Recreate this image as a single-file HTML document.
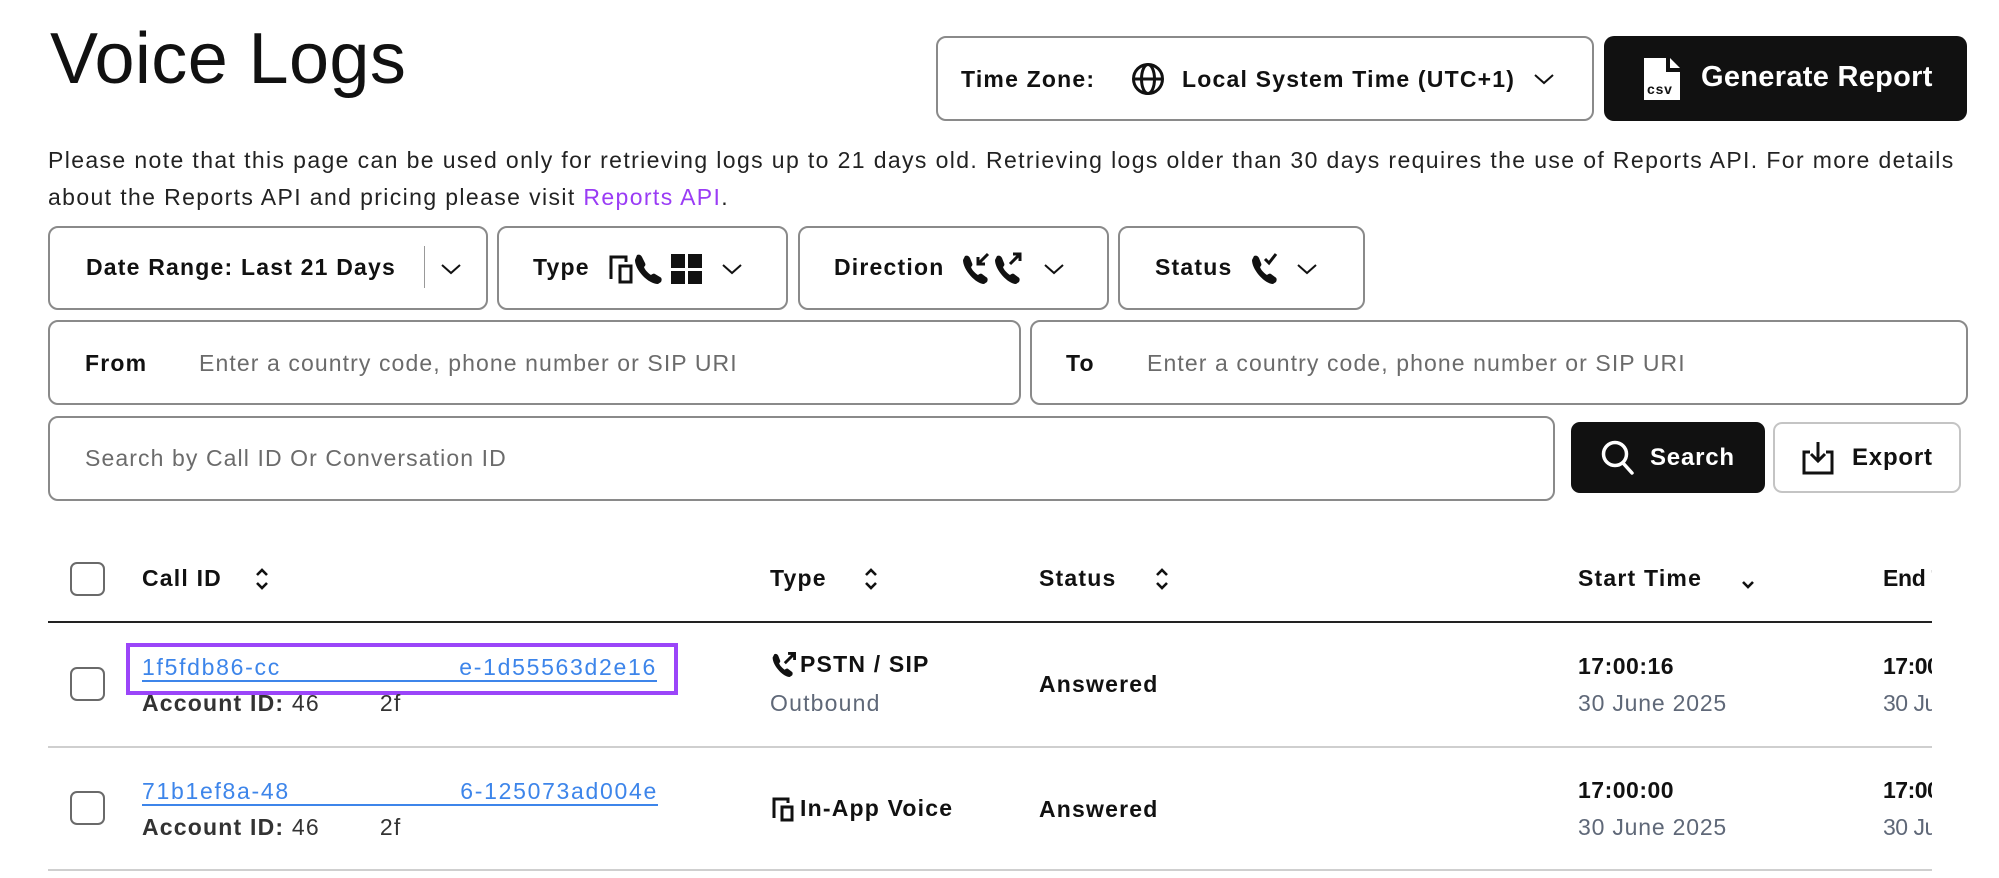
<!DOCTYPE html>
<html><head><meta charset="utf-8"><style>
*{box-sizing:border-box;margin:0;padding:0}
body{width:1999px;height:878px;overflow:hidden;background:#fff;font-family:"Liberation Sans",sans-serif;color:#111;position:relative;letter-spacing:0.8px}
.a{position:absolute}
.box{position:absolute;border:2px solid #8a8a8a;border-radius:10px;background:#fff}
.lbl{position:absolute;font-weight:700;font-size:23px;white-space:nowrap}
.ph{position:absolute;color:#6b6b6b;font-size:23px;white-space:nowrap}
.chev{position:absolute}
.cb{position:absolute;width:35px;height:34px;border:2.5px solid #6a6a6a;border-radius:7px}
.hd{position:absolute;font-weight:700;font-size:23px;top:565px}
.link{position:absolute;color:#3d85ea;font-size:23px;border-bottom:2px solid #3d85ea;line-height:26px;white-space:nowrap}
.acc{position:absolute;font-size:23px;color:#333;white-space:nowrap}
.sub{position:absolute;font-size:23px;color:#5f6878;white-space:nowrap}
.bold{position:absolute;font-weight:700;font-size:23px;white-space:nowrap}
</style></head><body>
<div class="a" style="left:50px;top:19px;font-size:72px;line-height:80px;letter-spacing:0.4px">Voice Logs</div>

<div class="box" style="left:936px;top:36px;width:658px;height:85px"></div>
<div class="lbl" style="left:961px;top:66px;letter-spacing:1.2px">Time Zone:</div>
<svg class="a" style="left:1131px;top:62px" width="34" height="34" viewBox="0 0 34 34" fill="none" stroke="#111" stroke-width="3"><circle cx="17" cy="17" r="14.5"/><line x1="2.5" y1="17" x2="31.5" y2="17"/><ellipse cx="17" cy="17" rx="6.5" ry="14.5"/></svg>
<div class="lbl" style="left:1182px;top:66px;letter-spacing:1.2px">Local System Time (UTC+1)</div>
<svg class="chev" style="left:1533px;top:73px" width="22" height="12" viewBox="0 0 22 12"><path d="M2 2l9 8 9-8" fill="none" stroke="#111" stroke-width="2"/></svg>

<div class="a" style="left:1604px;top:36px;width:363px;height:85px;background:#111;border-radius:10px"></div>
<svg class="a" style="left:1642px;top:56px" width="40" height="46" viewBox="0 0 40 46"><path d="M2 2h22v14h14v28H2z" fill="#fff"/><path d="M28 2l10 10H28z" fill="#fff"/><text x="5" y="38" font-family="Liberation Sans" font-weight="700" font-size="14" fill="#111">csv</text></svg>
<div class="a" style="left:1701px;top:61px;color:#fff;font-weight:700;font-size:29px;letter-spacing:0.3px">Generate Report</div>

<div class="a" style="left:48px;top:142px;font-size:23px;line-height:37px;width:1945px;color:#222;letter-spacing:1.38px">Please note that this page can be used only for retrieving logs up to 21 days old. Retrieving logs older than 30 days requires the use of Reports API. For more details<br>about the Reports API and pricing please visit <span style="color:#9a3cf5">Reports API</span>.</div>

<!-- filters -->
<div class="box" style="left:48px;top:226px;width:440px;height:84px"></div>
<div class="lbl" style="left:86px;top:254px;letter-spacing:1.2px">Date Range: Last 21 Days</div>
<div class="a" style="left:424px;top:246px;width:1px;height:42px;background:#999"></div>
<svg class="chev" style="left:440px;top:263px" width="22" height="12" viewBox="0 0 22 12"><path d="M2 2l9 8 9-8" fill="none" stroke="#111" stroke-width="2"/></svg>

<div class="box" style="left:497px;top:226px;width:291px;height:84px"></div>
<div class="lbl" style="left:533px;top:254px;letter-spacing:1.2px">Type</div>
<svg class="a" style="left:608px;top:252px" width="96" height="32" viewBox="0 0 96 32"><path d="M3 27V5h15v5" fill="none" stroke="#111" stroke-width="3"/><rect x="12" y="14" width="11" height="16" fill="none" stroke="#111" stroke-width="3"/><path d="M29 3c2-1 4 0 5 2l3 6c1 2 0 3-1 4 1 3 4 6 7 8 1-1 3-2 4-1l5 3c2 1 2 3 1 5l-3 2C40 32 27 18 27 8z" fill="#111"/><rect x="63" y="2" width="14" height="14" fill="#111"/><rect x="80" y="2" width="14" height="14" fill="#111"/><rect x="63" y="19" width="14" height="13" fill="#111"/><rect x="80" y="19" width="14" height="13" fill="#111"/></svg>
<svg class="chev" style="left:721px;top:263px" width="22" height="12" viewBox="0 0 22 12"><path d="M2 2l9 8 9-8" fill="none" stroke="#111" stroke-width="2"/></svg>

<div class="box" style="left:798px;top:226px;width:311px;height:84px"></div>
<div class="lbl" style="left:834px;top:254px;letter-spacing:1.2px">Direction</div>
<svg class="a" style="left:961px;top:252px" width="64" height="32" viewBox="0 0 64 32"><g fill="#111"><path d="M4 4c2-1 4 0 5 2l2 5c1 2 0 3-1 4 1 3 4 6 7 8 1-1 3-2 4-1l4 3c2 1 2 3 1 5l-3 2C15 32 2 18 2 8z"/><path d="M36 4c2-1 4 0 5 2l2 5c1 2 0 3-1 4 1 3 4 6 7 8 1-1 3-2 4-1l4 3c2 1 2 3 1 5l-3 2C47 32 34 18 34 8z"/></g><path d="M27 2L17 12M17 5v7h7" fill="none" stroke="#111" stroke-width="3"/><path d="M49 12L59 2M52 2h7v7" fill="none" stroke="#111" stroke-width="3"/></svg>
<svg class="chev" style="left:1043px;top:263px" width="22" height="12" viewBox="0 0 22 12"><path d="M2 2l9 8 9-8" fill="none" stroke="#111" stroke-width="2"/></svg>

<div class="box" style="left:1118px;top:226px;width:247px;height:84px"></div>
<div class="lbl" style="left:1155px;top:254px;letter-spacing:1.2px">Status</div>
<svg class="a" style="left:1250px;top:252px" width="32" height="32" viewBox="0 0 32 32"><path d="M4 4c2-1 4 0 5 2l2 5c1 2 0 3-1 4 1 3 4 6 7 8 1-1 3-2 4-1l4 3c2 1 2 3 1 5l-3 2C15 32 2 18 2 8z" fill="#111"/><path d="M15 7l4 4 7-9" fill="none" stroke="#111" stroke-width="3"/></svg>
<svg class="chev" style="left:1296px;top:263px" width="22" height="12" viewBox="0 0 22 12"><path d="M2 2l9 8 9-8" fill="none" stroke="#111" stroke-width="2"/></svg>

<!-- from/to -->
<div class="box" style="left:48px;top:320px;width:973px;height:85px"></div>
<div class="lbl" style="left:85px;top:350px;letter-spacing:1.2px">From</div>
<div class="ph" style="left:199px;top:350px;letter-spacing:1.1px">Enter a country code, phone number or SIP URI</div>
<div class="box" style="left:1030px;top:320px;width:938px;height:85px"></div>
<div class="lbl" style="left:1066px;top:350px;letter-spacing:1.2px">To</div>
<div class="ph" style="left:1147px;top:350px;letter-spacing:1.1px">Enter a country code, phone number or SIP URI</div>

<!-- search -->
<div class="box" style="left:48px;top:416px;width:1507px;height:85px"></div>
<div class="ph" style="left:85px;top:445px;letter-spacing:1.1px">Search by Call ID Or Conversation ID</div>
<div class="a" style="left:1571px;top:422px;width:194px;height:71px;background:#111;border-radius:9px"></div>
<svg class="a" style="left:1600px;top:439px" width="36" height="38" viewBox="0 0 36 38" fill="none" stroke="#fff" stroke-width="3.5"><circle cx="15" cy="15" r="11.5"/><path d="M23 24l9 10" stroke-linecap="round"/></svg>
<div class="a" style="left:1650px;top:444px;color:#fff;font-weight:700;font-size:24px">Search</div>
<div class="a" style="left:1773px;top:422px;width:188px;height:71px;border:2px solid #c4c4c4;border-radius:9px"></div>
<svg class="a" style="left:1801px;top:440px" width="34" height="36" viewBox="0 0 34 36" fill="none" stroke="#111" stroke-width="3"><path d="M9 12H3v21h28V12h-6"/><path d="M17 2v18M10 14l7 7 7-7"/></svg>
<div class="a" style="left:1852px;top:444px;font-weight:700;font-size:24px">Export</div>

<!-- table -->
<div class="cb" style="left:70px;top:562px"></div>
<div class="hd" style="left:142px;letter-spacing:1.2px">Call ID</div>
<svg class="a" style="left:255px;top:567px" width="14" height="24" viewBox="0 0 14 24" fill="none" stroke="#111" stroke-width="2.6"><path d="M2 8l5-5 5 5M2 16l5 5 5-5"/></svg>
<div class="hd" style="left:770px;letter-spacing:1.2px">Type</div>
<svg class="a" style="left:864px;top:567px" width="14" height="24" viewBox="0 0 14 24" fill="none" stroke="#111" stroke-width="2.6"><path d="M2 8l5-5 5 5M2 16l5 5 5-5"/></svg>
<div class="hd" style="left:1039px;letter-spacing:1.2px">Status</div>
<svg class="a" style="left:1155px;top:567px" width="14" height="24" viewBox="0 0 14 24" fill="none" stroke="#111" stroke-width="2.6"><path d="M2 8l5-5 5 5M2 16l5 5 5-5"/></svg>
<div class="hd" style="left:1578px;letter-spacing:1.2px">Start Time</div>
<svg class="a" style="left:1741px;top:580px" width="14" height="10" viewBox="0 0 14 10" fill="none" stroke="#111" stroke-width="2.6"><path d="M2 2l5 5 5-5"/></svg>
<div class="a" style="left:1883px;top:565px;width:49px;overflow:hidden;font-weight:700;font-size:23px;white-space:nowrap;letter-spacing:-0.3px">End Tim</div>
<div class="a" style="left:48px;top:621px;width:1884px;height:2px;background:#222"></div>

<!-- row1 -->
<div class="a" style="left:126px;top:643px;width:552px;height:52px;border:4px solid #9b45f9"></div>
<div class="cb" style="left:70px;top:667px"></div>
<div class="link" style="left:142px;top:654px;width:515px;letter-spacing:1.7px"><span>1f5fdb86-cc</span><span style="position:absolute;right:0">e-1d55563d2e16</span></div>
<div class="acc" style="left:142px;top:690px;letter-spacing:1.2px"><b>Account ID:</b> 46<span style="margin-left:60px">2f</span></div>
<svg class="a" style="left:771px;top:651px" width="26" height="26" viewBox="0 0 32 32"><path d="M4 4c2-1 4 0 5 2l2 5c1 2 0 3-1 4 1 3 4 6 7 8 1-1 3-2 4-1l4 3c2 1 2 3 1 5l-3 2C15 32 2 18 2 8z" fill="#111"/><path d="M17 15L28 4M21 3h8v8" fill="none" stroke="#111" stroke-width="3.5"/></svg>
<div class="bold" style="left:800px;top:651px;letter-spacing:1.2px">PSTN / SIP</div>
<div class="sub" style="left:770px;top:690px;letter-spacing:1.2px">Outbound</div>
<div class="bold" style="left:1039px;top:671px;letter-spacing:1.2px">Answered</div>
<div class="bold" style="left:1578px;top:653px;letter-spacing:0.5px">17:00:16</div>
<div class="sub" style="left:1578px;top:690px;letter-spacing:0.8px">30 June 2025</div>
<div class="a" style="left:1883px;top:653px;width:49px;overflow:hidden;font-weight:700;font-size:23px;white-space:nowrap;letter-spacing:-0.5px">17:00:2</div>
<div class="a" style="left:1883px;top:690px;width:49px;overflow:hidden;font-size:23px;color:#5f6878;white-space:nowrap;letter-spacing:-0.5px">30 June</div>
<div class="a" style="left:48px;top:746px;width:1884px;height:2px;background:#cfcfcf"></div>

<!-- row2 -->
<div class="cb" style="left:70px;top:791px"></div>
<div class="link" style="left:142px;top:778px;width:516px;letter-spacing:1.7px"><span>71b1ef8a-48</span><span style="position:absolute;right:0">6-125073ad004e</span></div>
<div class="acc" style="left:142px;top:814px;letter-spacing:1.2px"><b>Account ID:</b> 46<span style="margin-left:60px">2f</span></div>
<svg class="a" style="left:771px;top:796px" width="26" height="26" viewBox="0 0 26 26"><path d="M3 22V3h14v4" fill="none" stroke="#111" stroke-width="3"/><rect x="11" y="11" width="10" height="13" fill="none" stroke="#111" stroke-width="3"/></svg>
<div class="bold" style="left:800px;top:795px;letter-spacing:1.2px">In-App Voice</div>
<div class="bold" style="left:1039px;top:796px;letter-spacing:1.2px">Answered</div>
<div class="bold" style="left:1578px;top:777px;letter-spacing:0.5px">17:00:00</div>
<div class="sub" style="left:1578px;top:814px;letter-spacing:0.8px">30 June 2025</div>
<div class="a" style="left:1883px;top:777px;width:49px;overflow:hidden;font-weight:700;font-size:23px;white-space:nowrap;letter-spacing:-0.5px">17:00:2</div>
<div class="a" style="left:1883px;top:814px;width:49px;overflow:hidden;font-size:23px;color:#5f6878;white-space:nowrap;letter-spacing:-0.5px">30 June</div>
<div class="a" style="left:48px;top:869px;width:1884px;height:2px;background:#cfcfcf"></div>
</body></html>
